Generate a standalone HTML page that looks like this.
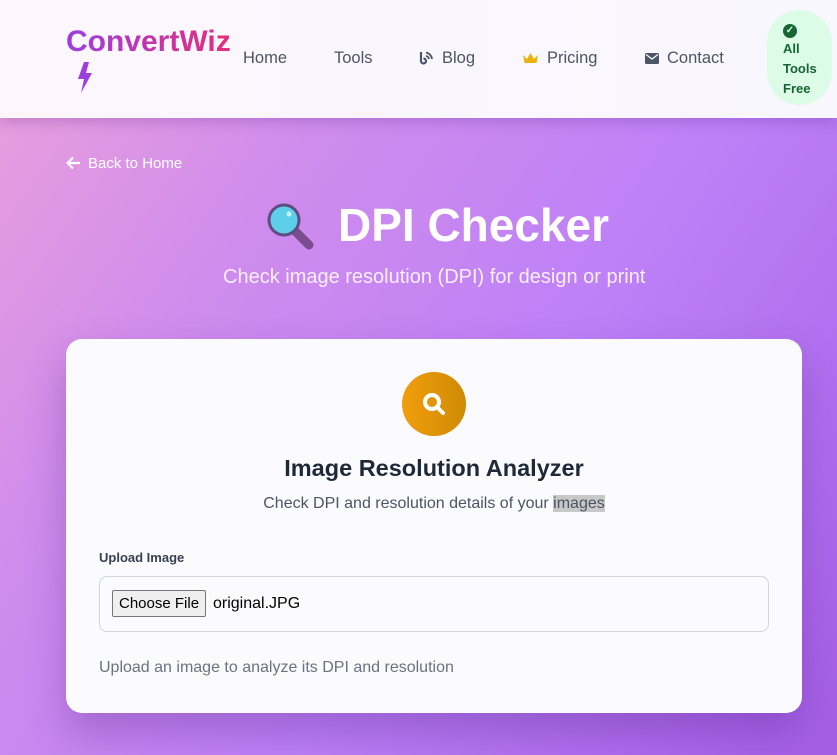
<!DOCTYPE html>
<html><head><meta charset="utf-8"><style>
*{margin:0;padding:0;box-sizing:border-box}
body{width:837px;height:755px;overflow:hidden;font-family:"Liberation Sans",sans-serif;background:linear-gradient(125deg,#eda1da 0%,#cf8ced 30%,#bd80f7 60%,#a45ee6 100%);position:relative}
.hdr{position:absolute;left:0;top:0;width:837px;height:118px;background:linear-gradient(90deg,#fdf6fd,#f8f7fd);box-shadow:0 4px 12px rgba(90,40,140,.25)}
.logo{position:absolute;left:66px;top:25px;font-size:30px;font-weight:bold;background:linear-gradient(90deg,#9b3fe0,#e52e7a);-webkit-background-clip:text;color:transparent}
.nav{position:absolute;top:49px;font-size:16.5px;color:#4b5563}
.badge{position:absolute;left:767px;top:10px;width:65px;height:95px;border-radius:33px;background:#dcfce7;color:#166534;font-size:13px;font-weight:bold;padding:9px 0 0 16px;line-height:20px}
.back{position:absolute;left:88px;top:155px;color:#fff;font-size:15px}
h1{position:absolute;left:338px;top:198px;color:#fff;font-size:46px;font-weight:bold}
.sub{position:absolute;left:223px;top:266px;white-space:nowrap;color:#fbeefe;font-size:20px}
.card{position:absolute;left:66px;top:339px;width:736px;height:374px;background:#fbfbfd;border-radius:16px;box-shadow:0 20px 40px rgba(80,30,130,.3)}
</style></head><body>
<div class="hdr">
<div class="logo">ConvertWiz</div>
<svg style="position:absolute;left:76px;top:62px" width="18" height="31" viewBox="0 0 18 31"><path d="M8 0 L2 17 L8 17 L5 31 L16 11 L10 11 L13 0Z" fill="#9b3fe0"/></svg>
<div class="nav" style="left:243px">Home</div>
<div class="nav" style="left:334px">Tools</div>
<svg style="position:absolute;left:418px;top:51px" width="15" height="15" viewBox="0 0 15 15"><path d="M3 1 V10 A2.5 2.5 0 1 0 5.5 7.5" fill="none" stroke="#4b5563" stroke-width="2.2"/><path d="M8 5 A4 4 0 0 1 11 8 M8 1.5 A7.5 7.5 0 0 1 14 8" fill="none" stroke="#4b5563" stroke-width="1.8"/></svg>
<div class="nav" style="left:442px">Blog</div>
<svg style="position:absolute;left:522px;top:52px" width="17" height="13" viewBox="0 0 17 13"><path d="M1 3 L5 7 L8.5 1 L12 7 L16 3 L14.5 11 H2.5Z" fill="#eab308"/></svg>
<div class="nav" style="left:547px">Pricing</div>
<svg style="position:absolute;left:645px;top:53px" width="14" height="11" viewBox="0 0 14 11"><rect width="14" height="11" rx="1.5" fill="#4b5563"/><path d="M1 1.5 L7 6 L13 1.5" fill="none" stroke="#f8f7fd" stroke-width="1.3"/></svg>
<div class="nav" style="left:667px">Contact</div>
<div class="badge"><span style="display:inline-block;width:14px;height:14px;border-radius:50%;background:#166534;color:#dcfce7;font-size:10px;text-align:center;line-height:14px">✓</span><br>All<br>Tools<br>Free</div>
</div>
<svg style="position:absolute;left:66px;top:156px" width="15" height="14" viewBox="0 0 15 14"><path d="M14 7 H2 M7 1.5 L1.5 7 L7 12.5" fill="none" stroke="#fff" stroke-width="2.2"/></svg>
<div class="back">Back to Home</div>
<svg style="position:absolute;left:266px;top:203px" width="50" height="48" viewBox="0 0 50 48"><line x1="29" y1="28" x2="43" y2="42" stroke="#7b4d8f" stroke-width="9" stroke-linecap="round"/><circle cx="18" cy="17" r="15" fill="#5ecfe8" stroke="#5d4d82" stroke-width="3"/><circle cx="23" cy="11" r="2.5" fill="#cbf2fb"/></svg>
<h1>DPI Checker</h1>
<div class="sub">Check image resolution (DPI) for design or print</div>
<div class="card">
<div style="position:absolute;left:336px;top:33px;width:64px;height:64px;border-radius:50%;background:linear-gradient(90deg,#f19e0b,#cf8a05)"><svg width="64" height="64" viewBox="0 0 64 64"><circle cx="30" cy="30" r="7" fill="none" stroke="#fff" stroke-width="4"/><line x1="35" y1="35" x2="41" y2="41" stroke="#fff" stroke-width="4" stroke-linecap="round"/></svg></div>
<div style="position:absolute;left:0;width:736px;top:116px;text-align:center;font-size:23.5px;font-weight:bold;color:#1f2937">Image Resolution Analyzer</div>
<div style="position:absolute;left:0;width:736px;top:156px;text-align:center;font-size:16px;color:#4b5563">Check DPI and resolution details of your <span style="background:#c8c8c8">images</span></div>
<div style="position:absolute;left:33px;top:211px;font-size:13px;font-weight:bold;color:#374151">Upload Image</div>
<div style="position:absolute;left:33px;top:237px;width:670px;height:56px;border:1px solid #d1d5db;border-radius:8px;background:#fbfbfd">
<span style="position:absolute;left:12px;top:13px;border:1px solid #767676;border-radius:2px;background:#efefef;padding:4px 6px;font-size:15px;color:#000">Choose File</span>
<span style="position:absolute;left:113px;top:18px;font-size:16px;color:#000">original.JPG</span></div>
<div style="position:absolute;left:33px;top:320px;font-size:16px;color:#6b7280">Upload an image to analyze its DPI and resolution</div>
</div>
</body></html>
